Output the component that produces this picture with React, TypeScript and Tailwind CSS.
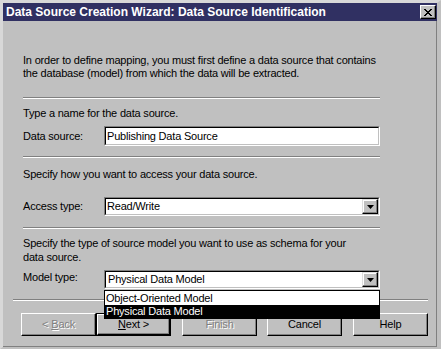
import React from "react";

const font = { fontFamily: '"Liberation Sans", Arial, sans-serif' };

function Sep({ w }: { w: string }) {
  return <div className={`${w} h-[2px] border-t border-t-[#808080] border-b border-b-white`} />;
}

function Sunken({ children, className = "" }: { children: React.ReactNode; className?: string }) {
  return (
    <div
      className={`border border-t-[#808080] border-l-[#808080] border-b-white border-r-white ${className}`}
    >
      <div className="h-full w-full bg-white border border-t-black border-l-black border-b-[#c0c0c0] border-r-[#c0c0c0] flex items-center">
        {children}
      </div>
    </div>
  );
}

function DropBtn() {
  return (
    <div className="ml-auto h-full w-[16px] bg-[#c0c0c0] border border-t-[#dfdfdf] border-l-[#dfdfdf] border-b-black border-r-black flex items-center justify-center shadow-[inset_-1px_-1px_0_#808080,inset_1px_1px_0_#ffffff]">
      <svg width="7" height="4" viewBox="0 0 7 4">
        <path d="M0 0H7L3.5 4Z" fill="#000" />
      </svg>
    </div>
  );
}

function Btn({
  children,
  disabled,
  className = "",
}: {
  children: React.ReactNode;
  disabled?: boolean;
  className?: string;
}) {
  return (
    <div
      className={`w-[75px] h-[23px] bg-[#c0c0c0] border border-t-white border-l-white border-b-black border-r-black shadow-[inset_-1px_-1px_0_#808080] flex items-center justify-center text-[11px] ${
        disabled ? "text-[#808080] [text-shadow:1px_1px_0_#ffffff]" : "text-black"
      } ${className}`}
    >
      {children}
    </div>
  );
}

export default function App() {
  return (
    <div
      style={font}
      className="w-[441px] h-[349px] bg-[#c0c0c0] flex flex-col border-t-[3px] border-l-[3px] border-t-[#d8d8d8] border-l-[#d8d8d8] border-r-[4px] border-r-[#c0c0c0] border-b-[2px] border-b-[#c0c0c0] text-black text-[11px] leading-[13px] tracking-[-0.2px]"
    >
      <div className="h-[18px] bg-[#303062] flex items-center pl-[3px]">
        <span className="text-white font-bold text-[12px] tracking-[0px]">
          Data Source Creation Wizard: Data Source Identification
        </span>
        <div className="ml-auto mr-[1px] w-[16px] h-[14px] bg-[#c0c0c0] border border-t-white border-l-white border-b-black border-r-black shadow-[inset_-1px_-1px_0_#808080] flex items-center justify-center">
          <svg width="8" height="7" viewBox="0 0 8 7">
            <path d="M0 0L7 7M1 0L8 7M7 0L0 7M8 0L1 7" stroke="#000" strokeWidth="1" shapeRendering="crispEdges" />
          </svg>
        </div>
      </div>

      <div className="flex-1 flex flex-col border-r border-b border-r-[#808080] border-b-[#808080]">
        <div className="pl-[20px] flex flex-col">
          <p className="mt-[33px] leading-[13px]">
            In order to define mapping, you must first define a data source that contains
            <br />
            the database (model) from which the data will be extracted.
          </p>
          <div className="mt-[17px]">
            <Sep w="w-[357px]" />
          </div>
          <p className="mt-[8px]">Type a name for the data source.</p>
          <div className="mt-[6px] flex items-center">
            <span className="w-[81px]">Data source:</span>
            <Sunken className="w-[276px] h-[20px]">
              <span className="pl-[1px]">Publishing Data Source</span>
            </Sunken>
          </div>
          <div className="mt-[10px]">
            <Sep w="w-[357px]" />
          </div>
          <p className="mt-[10px]">Specify how you want to access your data source.</p>
          <div className="mt-[16px] flex items-center">
            <span className="w-[81px]">Access type:</span>
            <Sunken className="w-[276px] h-[19px]">
              <span className="pl-[1px]">Read/Write</span>
              <DropBtn />
            </Sunken>
          </div>
          <div className="mt-[11px]">
            <Sep w="w-[357px]" />
          </div>
          <p className="mt-[7px] leading-[14px]">
            Specify the type of source model you want to use as schema for your
            <br />
            data source.
          </p>
          <div className="mt-[6px] flex items-center relative z-10">
            <span className="w-[81px] mb-[4px]">Model type:</span>
            <div className="relative">
              <Sunken className="w-[276px] h-[19px]">
                <span className="pl-[2px]">Physical Data Model</span>
                <DropBtn />
              </Sunken>
              <div className="absolute left-0 top-[20px] w-[276px] border border-black bg-white flex flex-col">
                <div className="h-[14px] pl-[1px] flex items-center">Object-Oriented Model</div>
                <div className="h-[13px] pl-[1px] flex items-center bg-black text-white">Physical Data Model</div>
              </div>
            </div>
          </div>
        </div>

        <div className="pl-[10px] mt-[10px]">
          <Sep w="w-[415px]" />
        </div>

        <div className="mt-[12px] pl-[18px] flex">
          <Btn disabled>
            &lt; <span className="underline ml-[3px]">B</span>ack
          </Btn>
          <div className="w-[75px] h-[23px] border border-black flex">
            <div className="flex-1 bg-[#c0c0c0] border border-t-white border-l-white border-b-black border-r-black shadow-[inset_-1px_-1px_0_#808080] flex items-center justify-center">
              <span className="underline">N</span>ext &gt;
            </div>
          </div>
          <Btn disabled className="ml-[11px]">
            Finish
          </Btn>
          <Btn className="ml-[10px]">Cancel</Btn>
          <Btn className="ml-[11px]">Help</Btn>
        </div>
      </div>
    </div>
  );
}
